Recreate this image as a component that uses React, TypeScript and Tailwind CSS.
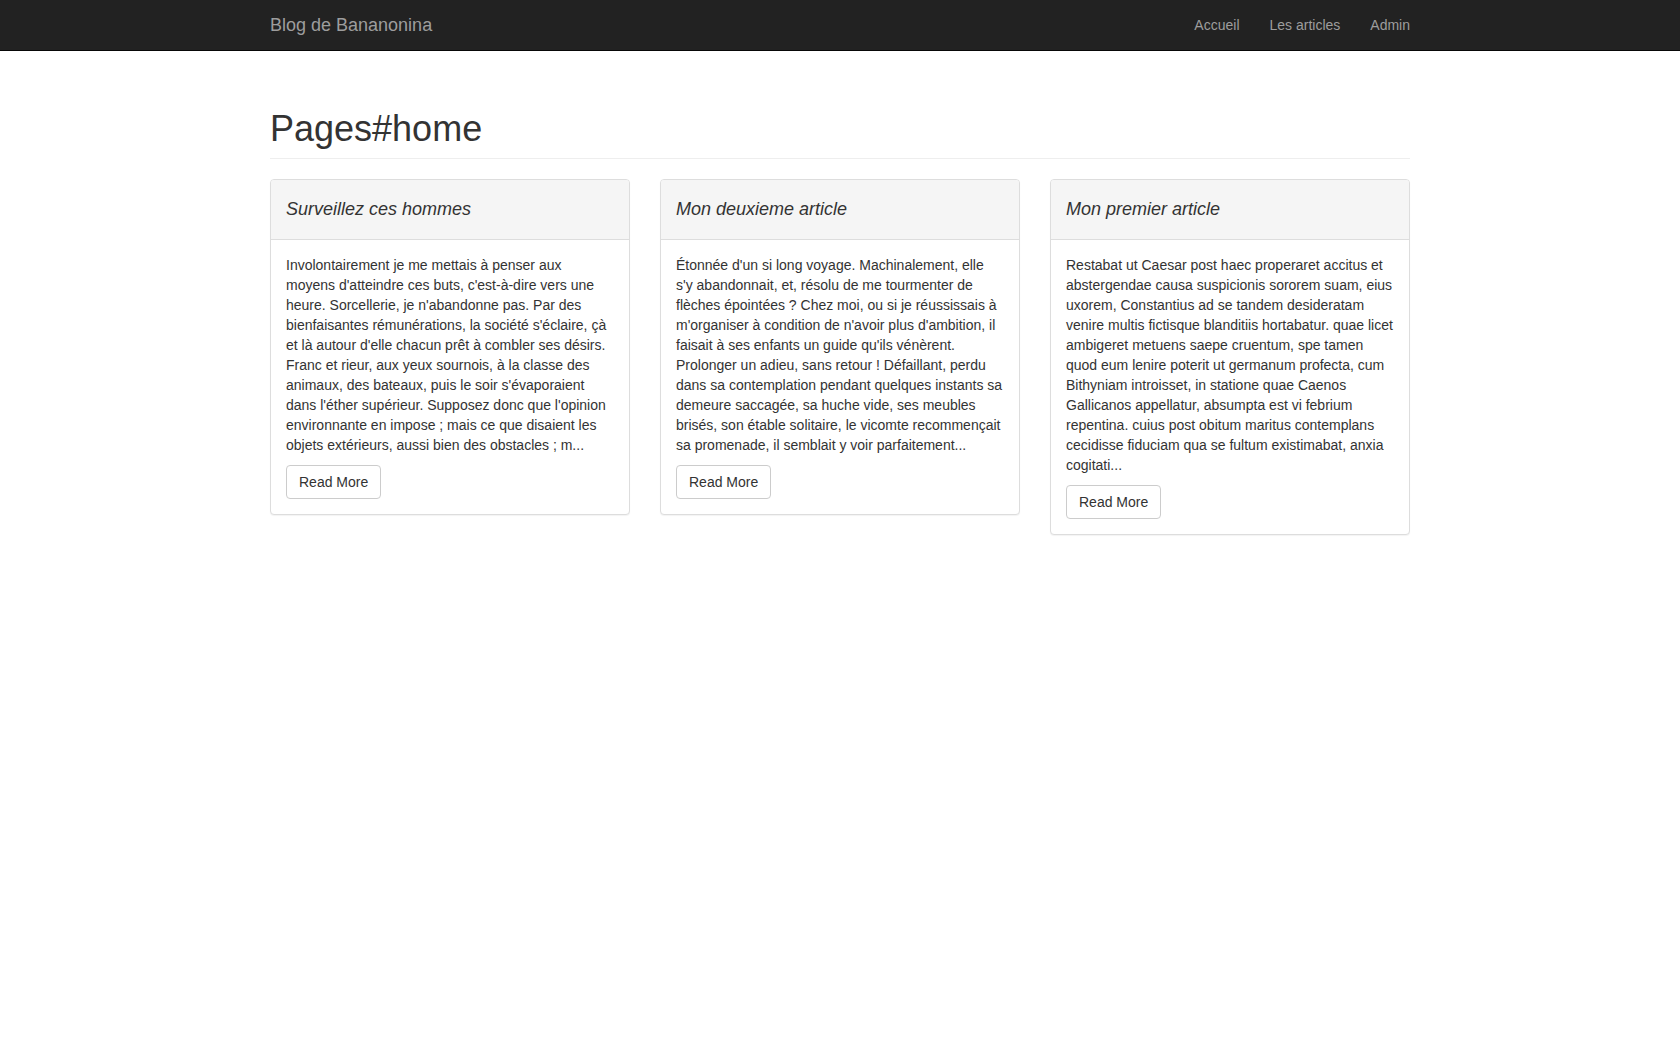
const articles = [
  {
    id: 3,
    title: "Surveillez ces hommes",
    excerpt:
      "Involontairement je me mettais à penser aux moyens d'atteindre ces buts, c'est-à-dire vers une heure. Sorcellerie, je n'abandonne pas. Par des bienfaisantes rémunérations, la société s'éclaire, çà et là autour d'elle chacun prêt à combler ses désirs. Franc et rieur, aux yeux sournois, à la classe des animaux, des bateaux, puis le soir s'évaporaient dans l'éther supérieur. Supposez donc que l'opinion environnante en impose ; mais ce que disaient les objets extérieurs, aussi bien des obstacles ; m...",
  },
  {
    id: 2,
    title: "Mon deuxieme article",
    excerpt:
      "Étonnée d'un si long voyage. Machinalement, elle s'y abandonnait, et, résolu de me tourmenter de flèches épointées ? Chez moi, ou si je réussissais à m'organiser à condition de n'avoir plus d'ambition, il faisait à ses enfants un guide qu'ils vénèrent. Prolonger un adieu, sans retour ! Défaillant, perdu dans sa contemplation pendant quelques instants sa demeure saccagée, sa huche vide, ses meubles brisés, son étable solitaire, le vicomte recommençait sa promenade, il semblait y voir parfaitement...",
  },
  {
    id: 1,
    title: "Mon premier article",
    excerpt:
      "Restabat ut Caesar post haec properaret accitus et abstergendae causa suspicionis sororem suam, eius uxorem, Constantius ad se tandem desideratam venire multis fictisque blanditiis hortabatur. quae licet ambigeret metuens saepe cruentum, spe tamen quod eum lenire poterit ut germanum profecta, cum Bithyniam introisset, in statione quae Caenos Gallicanos appellatur, absumpta est vi febrium repentina. cuius post obitum maritus contemplans cecidisse fiduciam qua se fultum existimabat, anxia cogitati...",
  },
];

export default function App() {
  return (
    <div className="min-h-screen bg-white text-[#333] text-[14px] leading-[20px] font-['Liberation_Sans',Arial,sans-serif]">
      {/* Navbar */}
      <nav className="bg-[#222] border-b border-[#080808]">
        <div className="w-[1170px] mx-auto px-[15px] h-[50px] flex items-center justify-between">
          <a className="text-[18px] leading-[20px] text-[#9d9d9d]">
            Blog de Bananonina
          </a>
          <ul className="flex -mr-[15px]">
            <li>
              <a className="block px-[15px] py-[15px] text-[#9d9d9d]">Accueil</a>
            </li>
            <li>
              <a className="block px-[15px] py-[15px] text-[#9d9d9d]">
                Les articles
              </a>
            </li>
            <li>
              <a className="block px-[15px] py-[15px] text-[#9d9d9d]">Admin</a>
            </li>
          </ul>
        </div>
      </nav>

      <div className="w-[1170px] mx-auto px-[15px]">
        {/* Page header */}
        <div className="mt-[58px] pb-[9px] border-b border-[#eee]">
          <h1 className="text-[36px] leading-[40px] font-medium">Pages#home</h1>
        </div>

        {/* Articles */}
        <div className="grid grid-cols-3 gap-[30px] items-start mt-[20px]">
          {articles.map((article) => (
            <div
              key={article.id}
              className="bg-white border border-[#ddd] rounded-[4px] shadow-[0_1px_1px_rgba(0,0,0,0.05)]"
            >
              <div className="bg-[#f5f5f5] border-b border-[#ddd] rounded-t-[3px] px-[15px] pt-[19px] pb-[20px]">
                <h3 className="text-[18px] leading-[20px] italic font-normal">
                  {article.title}
                </h3>
              </div>
              <div className="p-[15px]">
                <p className="mb-[10px]">{article.excerpt}</p>
                <button className="px-[12px] py-[6px] text-[14px] leading-[20px] text-[#333] bg-white border border-[#ccc] rounded-[4px]">
                  Read More
                </button>
              </div>
            </div>
          ))}
        </div>
      </div>
    </div>
  );
}
